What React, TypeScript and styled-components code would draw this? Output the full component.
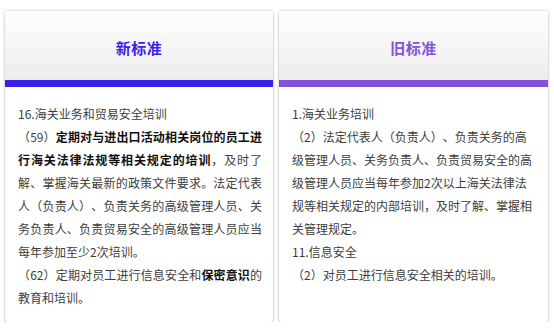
import styled, { createGlobalStyle } from 'styled-components'

const GlobalStyle = createGlobalStyle`
    html, body {
        margin: 0;
        padding: 0;
        background: #ffffff;
    }
    body {
        font-family: "Noto Sans CJK SC", "Noto Sans", sans-serif;
    }
`

const Page = styled.div`
    display: grid;
    grid-template-columns: 268px 269px;
    gap: 6px;
    padding: 11px 0 0 5px;
`

const Card = styled.div`
    height: 311px;
    background: #ffffff;
    border-radius: 3px;
    box-shadow: 0 0 3px rgba(0, 0, 0, 0.28), 0 1px 2px rgba(0, 0, 0, 0.12);
    overflow: hidden;
    display: flex;
    flex-direction: column;
`

const Header = styled.div<{ $accent: string }>`
    height: 76px;
    box-sizing: border-box;
    padding-top: 3px;
    display: flex;
    align-items: center;
    justify-content: center;
    background: linear-gradient(to bottom, #ffffff, #ececec);
    border-bottom: 7px solid ${p => p.$accent};
    color: ${p => p.$accent};
    font-size: 15px;
    font-weight: 700;
    letter-spacing: 0.5px;
`

const Body = styled.div<{ $padRight: number; $justify?: boolean }>`
    padding: 15px ${p => p.$padRight}px 0 13px;
    font-size: 12px;
    line-height: 23px;
    color: #3d3d3d;
    text-align: ${p => (p.$justify ? 'justify' : 'left')};
    text-spacing-trim: space-all;
`

const Para = styled.p`
    margin: 0;
`

const Strong = styled.b`
    color: #111111;
    font-weight: 700;
`

export default function App() {
    return (
        <>
            <GlobalStyle />
            <Page>
                <Card>
                    <Header $accent="#3a22ec">新标准</Header>
                    <Body $padRight={11} $justify>
                        <Para>16.海关业务和贸易安全培训</Para>
                        <Para>（59）<Strong>定期对与进出口活动相关岗位的员工进行海关法律法规等相关规定的培训</Strong>，及时了解、掌握海关最新的政策文件要求。法定代表人（负责人）、负责关务的高级管理人员、关务负责人、负责贸易安全的高级管理人员应当每年参加至少2次培训。</Para>
                        <Para>（62）定期对员工进行信息安全和<Strong>保密意识</Strong>的教育和培训。</Para>
                    </Body>
                </Card>
                <Card>
                    <Header $accent="#8552da">旧标准</Header>
                    <Body $padRight={14}>
                        <Para>1.海关业务培训</Para>
                        <Para>（2）法定代表人（负责人）、负责关务的高级管理人员、关务负责人、负责贸易安全的高级管理人员应当每年参加2次以上海关法律法规等相关规定的内部培训，及时了解、掌握相关管理规定。</Para>
                        <Para>11.信息安全</Para>
                        <Para>（2）对员工进行信息安全相关的培训。</Para>
                    </Body>
                </Card>
            </Page>
        </>
    )
}
